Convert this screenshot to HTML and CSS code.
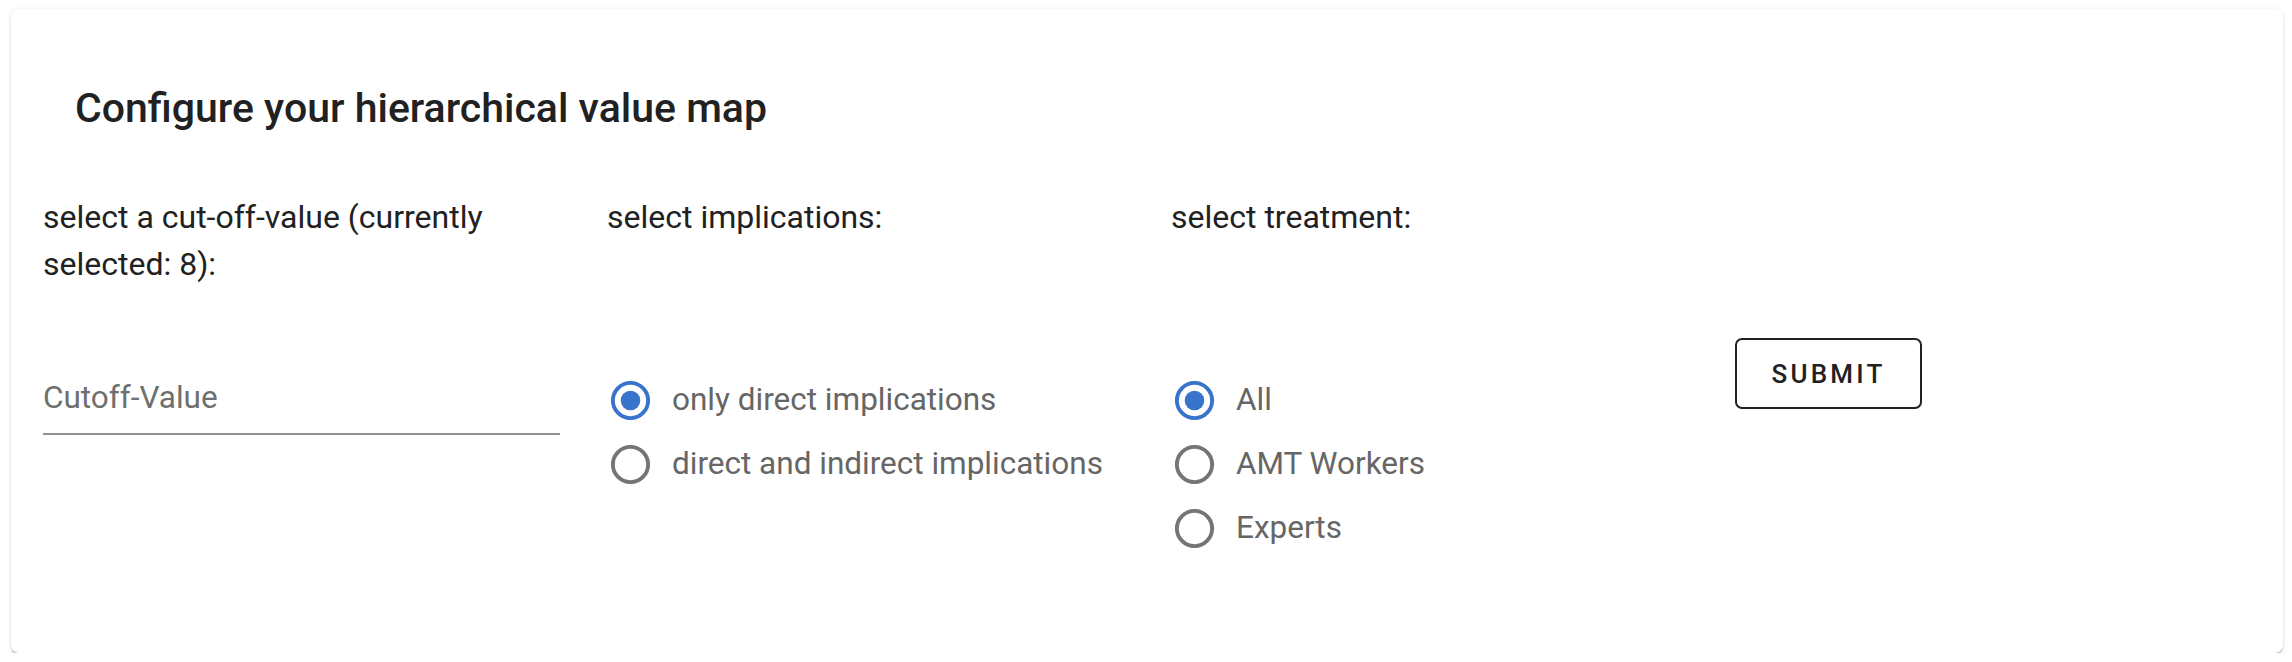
FILE: index.html
```html
<!DOCTYPE html>
<html lang="en">
<head>
<meta charset="utf-8">
<title>Configure your hierarchical value map</title>
<link rel="stylesheet" href="styles.css">
</head>
<body>
<div class="card">
  <h2 class="title">Configure your hierarchical value map</h2>
  <div class="grid">
    <div class="label">select a cut-off-value (currently selected: 8):</div>
    <div class="label">select implications:</div>
    <div class="label">select treatment:</div>
    <div class="label"></div>

    <div class="field">
      <input class="input" type="text" placeholder="Cutoff-Value">
    </div>
    <div class="group">
      <label class="radio">
        <svg class="icon" viewBox="0 0 24 24"><circle class="ring on" cx="12" cy="12" r="9"/><circle class="dot" cx="12" cy="12" r="5"/></svg>
        <span class="rtext">only direct implications</span>
      </label>
      <label class="radio">
        <svg class="icon" viewBox="0 0 24 24"><circle class="ring" cx="12" cy="12" r="9"/></svg>
        <span class="rtext">direct and indirect implications</span>
      </label>
    </div>
    <div class="group">
      <label class="radio">
        <svg class="icon" viewBox="0 0 24 24"><circle class="ring on" cx="12" cy="12" r="9"/><circle class="dot" cx="12" cy="12" r="5"/></svg>
        <span class="rtext">All</span>
      </label>
      <label class="radio">
        <svg class="icon" viewBox="0 0 24 24"><circle class="ring" cx="12" cy="12" r="9"/></svg>
        <span class="rtext">AMT Workers</span>
      </label>
      <label class="radio">
        <svg class="icon" viewBox="0 0 24 24"><circle class="ring" cx="12" cy="12" r="9"/></svg>
        <span class="rtext">Experts</span>
      </label>
    </div>
    <div class="actions">
      <button class="btn" type="button">Submit</button>
    </div>
  </div>
</div>
</body>
</html>
```

FILE: styles.css
```css
html, body {
  margin: 0;
  padding: 0;
  background: #ffffff;
}

body {
  font-family: Roboto, "Liberation Sans", sans-serif;
  color: rgba(0, 0, 0, 0.87);
}

.card {
  box-sizing: border-box;
  margin: 9px 9px 0 11px;
  height: 644px;
  padding: 77px 0 0 32px;
  background: #ffffff;
  border-radius: 8px;
  box-shadow: 0 3px 2px -1px rgba(0, 0, 0, 0.22), 0 1px 2px rgba(0, 0, 0, 0.12), 0 1px 6px rgba(0, 0, 0, 0.08);
}

.title {
  margin: 0;
  padding-left: 32px;
  font-size: 41px;
  line-height: 44px;
  font-weight: 500;
  color: #212121;
}

.grid {
  margin-top: 64px;
  display: grid;
  grid-template-columns: 564px 564px 564px auto;
  row-gap: 50px;
  align-items: start;
}

.label {
  font-size: 32px;
  line-height: 47px;
  width: 520px;
  color: #212121;
}

.field {
  margin-top: 42px;
  width: 517px;
  padding-bottom: 17px;
  border-bottom: 2px solid #8f8f8f;
}

.input {
  display: block;
  box-sizing: border-box;
  width: 100%;
  border: none;
  outline: none;
  padding: 0;
  margin: 0;
  font-family: inherit;
  font-size: 31.5px;
  line-height: 36px;
  height: 36px;
  color: #212121;
  background: transparent;
}

.input::placeholder {
  color: #6f6f6f;
  opacity: 1;
}

.group {
  margin-top: 30px;
  display: flex;
  flex-direction: column;
}

.radio {
  display: flex;
  align-items: center;
  gap: 18px;
  height: 64px;
}

.icon {
  width: 47px;
  height: 47px;
  flex: none;
}

.ring {
  fill: none;
  stroke: #757575;
  stroke-width: 2;
}

.ring.on {
  stroke: #3874cb;
}

.dot {
  fill: #3874cb;
}

.rtext {
  font-size: 31.5px;
  line-height: 40px;
  color: #666666;
}

.btn {
  box-sizing: border-box;
  width: 187px;
  height: 71px;
  border: 2px solid #212121;
  border-radius: 7px;
  background: #ffffff;
  font-family: inherit;
  font-size: 26px;
  font-weight: 500;
  letter-spacing: 3.2px;
  text-transform: uppercase;
  color: #212121;
  padding: 0;
}
```
